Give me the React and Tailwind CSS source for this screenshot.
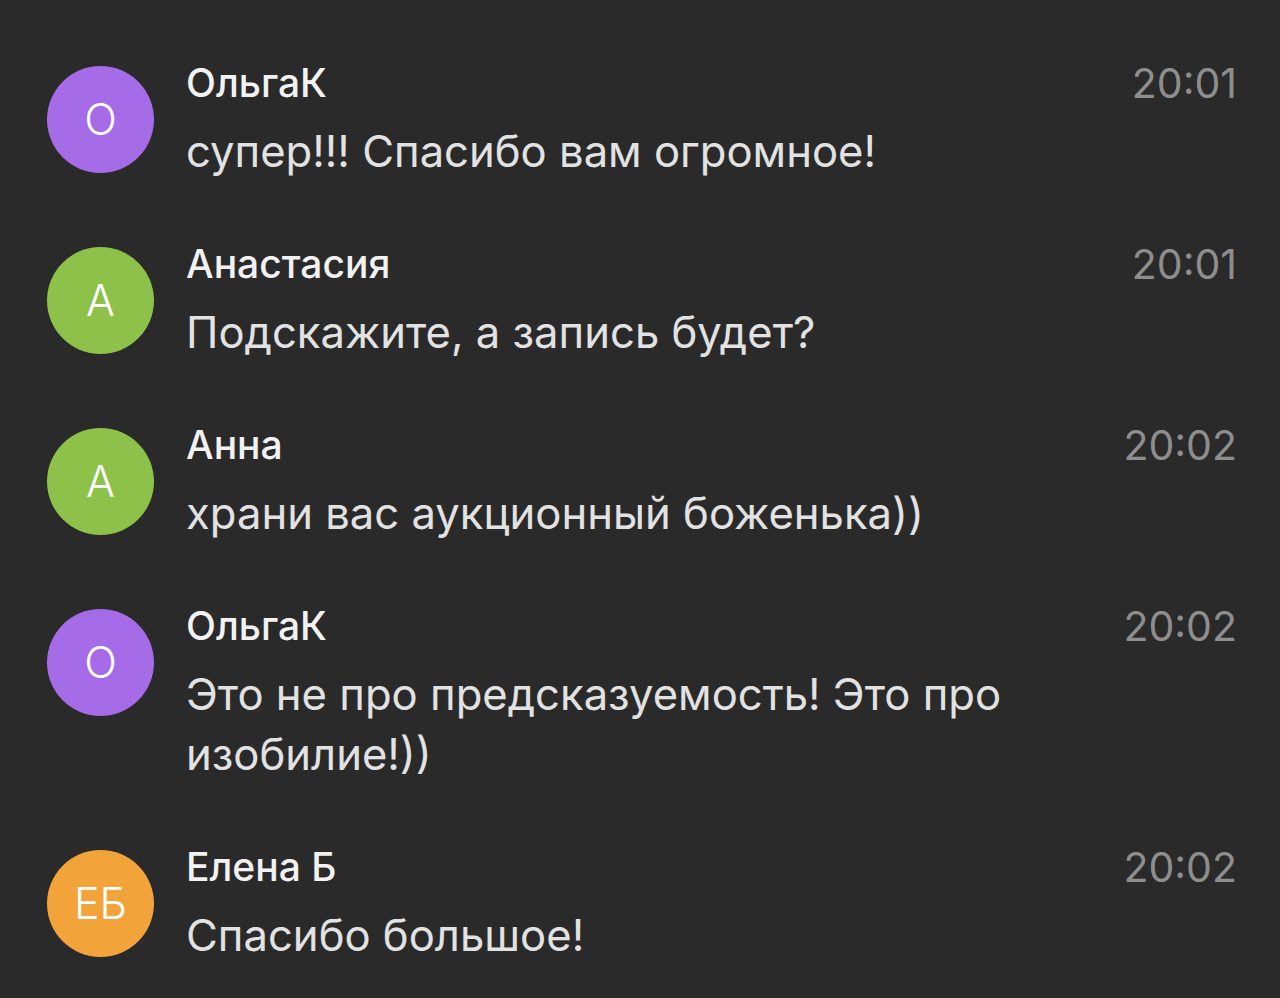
import React from "react";

const rows = [
  { initials: "О", color: "bg-[#a66ce8]", name: "ОльгаК", time: "20:01", text: "супер!!! Спасибо вам огромное!" },
  { initials: "А", color: "bg-[#8dc14a]", name: "Анастасия", time: "20:01", text: "Подскажите, а запись будет?" },
  { initials: "А", color: "bg-[#8dc14a]", name: "Анна", time: "20:02", text: "храни вас аукционный боженька))" },
  { initials: "О", color: "bg-[#a66ce8]", name: "ОльгаК", time: "20:02", text: "Это не про предсказуемость! Это про изобилие!))" },
  { initials: "ЕБ", color: "bg-[#f2a43a]", name: "Елена Б", time: "20:02", text: "Спасибо большое!" },
];

export default function App() {
  return (
    <div
      className="w-full h-[998px] bg-[#2a2a2a] overflow-hidden pt-[59px] pl-[47px] pr-[43px] flex flex-col gap-[58px]"
      style={{ fontFamily: "Inter, 'Noto Sans', sans-serif" }}
    >
      {rows.map((r, i) => (
        <div key={i} className="flex items-start">
          <div
            className={`mt-[7px] w-[107px] h-[107px] shrink-0 rounded-full ${r.color} flex items-center justify-center text-white text-[43px] font-light leading-none`}
          >
            {r.initials}
          </div>
          <div className="ml-[32px] flex-1 min-w-0">
            <div className="flex items-start justify-between">
              <div className="text-[39px] leading-[48px] font-medium text-[#f2f2f2]">{r.name}</div>
              <div className="text-[41px] leading-[48px] text-[#8e8e8e]">{r.time}</div>
            </div>
            <div className="mt-[15px] text-[43.6px] leading-[60px] text-[#e2e2e2] max-w-[840px]">{r.text}</div>
          </div>
        </div>
      ))}
    </div>
  );
}
